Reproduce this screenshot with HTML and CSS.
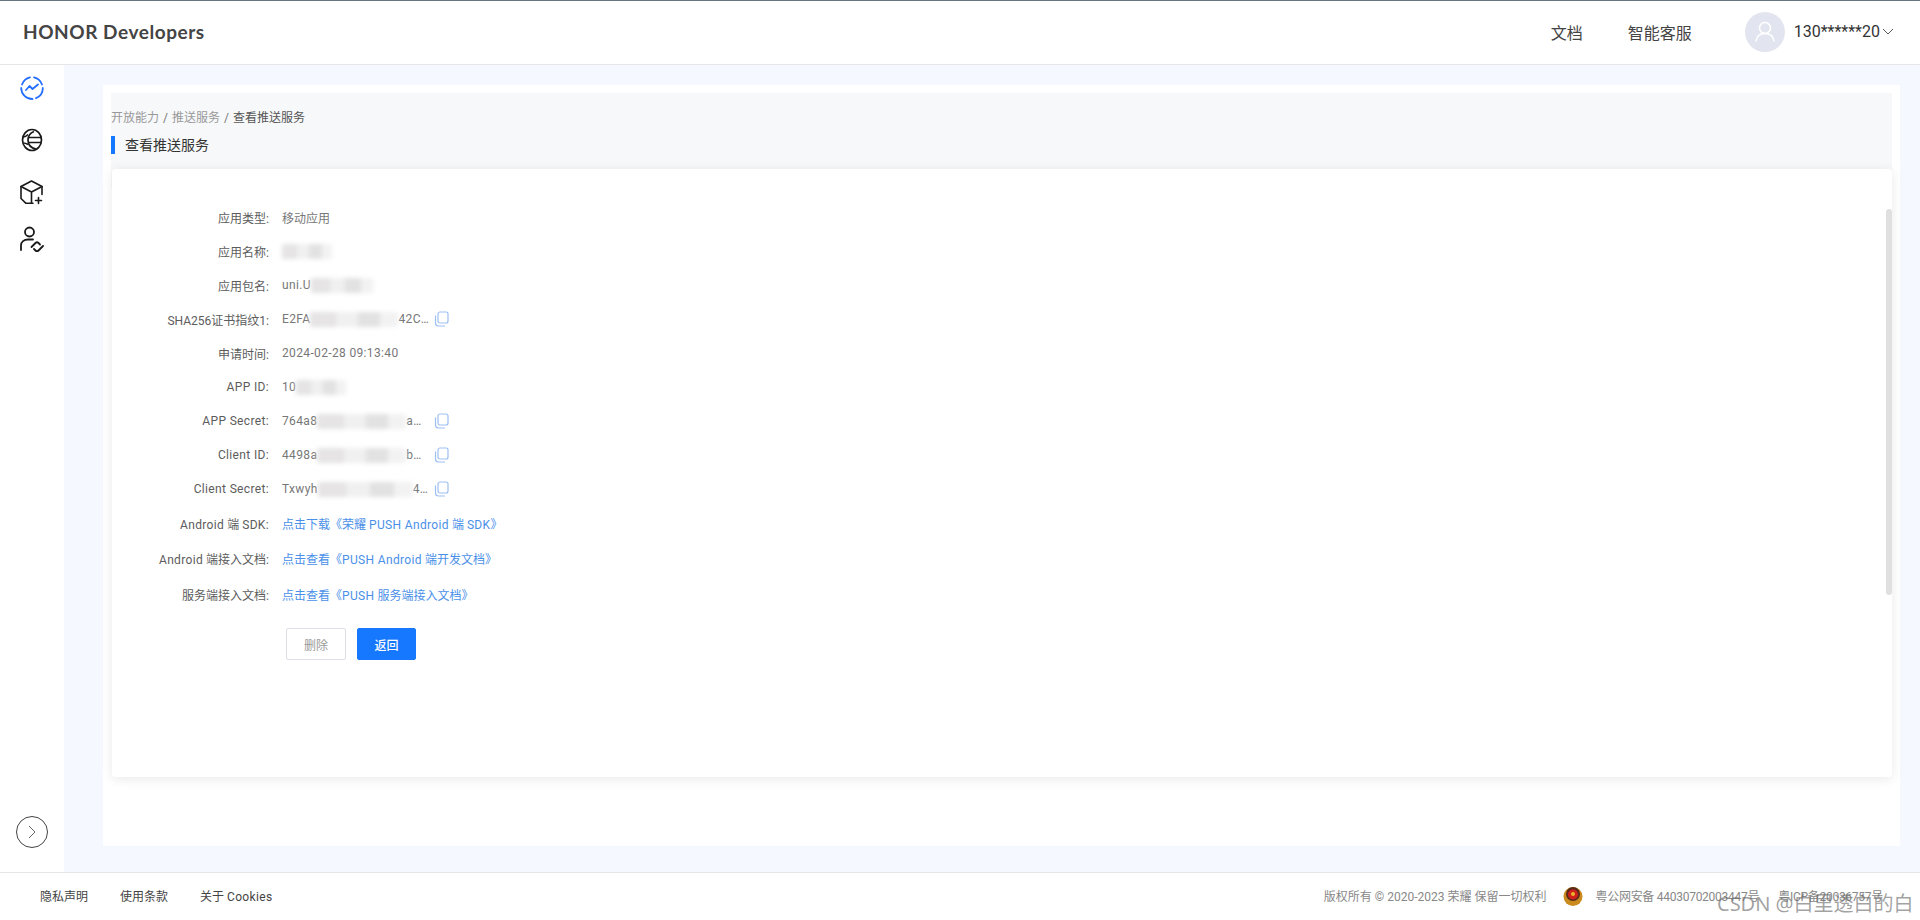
FILE: index.html
```html
<!DOCTYPE html>
<html lang="zh-CN">
<head>
<meta charset="utf-8">
<title>HONOR Developers</title>
<link rel="stylesheet" href="styles.css">
</head>
<body>
<header class="topbar">
  <div class="logo">HONOR Developers</div>
  <nav class="topnav">
    <a class="nav-doc">文档</a>
    <a class="nav-help">智能客服</a>
    <div class="user">
      <span class="avatar">
        <svg width="40" height="40" viewBox="0 0 40 40" fill="none" stroke="#fff" stroke-width="1.5"><circle cx="20" cy="16" r="5.5"/><path d="M11 29c.8-5 4.400-7.500 9-7.500s8.200 2.500 9 7.500" stroke-linecap="round"/></svg>
      </span>
      <span class="user-name">130******20</span>
      <svg class="caret" width="12" height="7" viewBox="0 0 12 7" fill="none" stroke="#555" stroke-width="1"><path d="M1 1l5 5 5-5"/></svg>
    </div>
  </nav>
</header>
<div class="middle">
  <aside class="sidebar">
    <div class="side-icons">
      <svg class="ic-1" width="26" height="26" viewBox="0 0 26 26" fill="none" stroke="#256fff" stroke-width="1.8"><path d="M3 9.500A11 11 0 0 1 11 2.300M15 2.300A11 11 0 0 1 23 9.500M23.800 13A11 11 0 0 1 17 23.200M13.500 24A11 11 0 0 1 2.200 13" stroke-linecap="round"/><path d="M7 15l3.500-4 3 3L19 9.500" stroke-linecap="round" stroke-linejoin="round"/></svg>
      <svg class="ic-2" width="22" height="26" viewBox="0 0 22 26" fill="none" stroke="#1a1a1a" stroke-width="1.700"><ellipse cx="11" cy="13" rx="9.500" ry="10.500"/><path d="M7 13c0-4 2-7 6-8.500"/><path d="M7 13c0 4.500 3 8 8 9"/><path d="M2.500 10c2 0 3-1 4.500-2.500M2.500 16c2 0 3 .5 4.500 1.500"/><path d="M8 10.500h12.500M8 15.500h12.500"/></svg>
      <svg class="ic-3" width="26" height="26" viewBox="0 0 26 26" fill="none" stroke="#1a1a1a" stroke-width="1.600" stroke-linejoin="round" stroke-linecap="round"><path d="M14 24.300H7L2 19.500V7.500L12.500 2 23 7.500v8"/><path d="M2 7.500l10.500 5.500L23 7.500M12.500 13v11"/><path d="M19.500 18.500v6M16.500 21.500h6"/></svg>
      <svg class="ic-4" width="26" height="26" viewBox="0 0 26 26" fill="none" stroke="#1a1a1a" stroke-width="1.800" stroke-linecap="round" stroke-linejoin="round"><circle cx="10.500" cy="6" r="4.500"/><path d="M2 24v-4.500c0-3.500 3-6 7-6h5"/><path d="M12.500 21l4-4c1-1 2.200-.8 3 0l1.500 1.500"/><path d="M24 20l-4.500 4.500c-1 1-2.200.8-3 0L15 23"/></svg>
    </div>
    <div class="collapse">
      <svg width="10" height="14" viewBox="0 0 10 14" fill="none" stroke="#666" stroke-width="1"><path d="M2 1l6 6-6 6"/></svg>
    </div>
  </aside>
  <main class="main">
    <section class="panel">
      <div class="inner">
        <div class="crumbs"><span class="crumb-dim">开放能力</span><i>/</i><span class="crumb-dim">推送服务</span><i>/</i><span>查看推送服务</span></div>
        <h1 class="page-title">查看推送服务</h1>
        <div class="card">
          <div class="track"></div>
          <dl class="rows">
            <div class="row"><dt>应用类型:</dt><dd>移动应用</dd></div>
            <div class="row"><dt>应用名称:</dt><dd><span class="mask mask-name"></span></dd></div>
            <div class="row"><dt>应用包名:</dt><dd><span class="lat">uni.U</span><span class="mask mask-pkg"></span></dd></div>
            <div class="row"><dt>SHA256证书指纹1:</dt><dd><span class="val"><span class="lat">E2FA</span><span class="mask mask-sha"></span><span class="lat">42C…</span></span><svg class="copy" width="15" height="16" viewBox="0 0 15 16" fill="none" stroke="#9dc0f3" stroke-width="1.200"><rect x="4" y="1" width="10" height="11" rx="2"/><path d="M1.500 4.500V12A3 3 0 0 0 4.500 15H11"/></svg></dd></div>
            <div class="row"><dt>申请时间:</dt><dd class="lat">2024-02-28 09:13:40</dd></div>
            <div class="row"><dt class="lat">APP ID:</dt><dd><span class="lat">10</span><span class="mask mask-id"></span></dd></div>
            <div class="row"><dt class="lat">APP Secret:</dt><dd><span class="val"><span class="lat">764a8</span><span class="mask mask-secret"></span><span class="lat">a…</span></span><svg class="copy" width="15" height="16" viewBox="0 0 15 16" fill="none" stroke="#9dc0f3" stroke-width="1.200"><rect x="4" y="1" width="10" height="11" rx="2"/><path d="M1.500 4.500V12A3 3 0 0 0 4.500 15H11"/></svg></dd></div>
            <div class="row"><dt class="lat">Client ID:</dt><dd><span class="val"><span class="lat">4498a</span><span class="mask mask-client"></span><span class="lat">b…</span></span><svg class="copy" width="15" height="16" viewBox="0 0 15 16" fill="none" stroke="#9dc0f3" stroke-width="1.200"><rect x="4" y="1" width="10" height="11" rx="2"/><path d="M1.500 4.500V12A3 3 0 0 0 4.500 15H11"/></svg></dd></div>
            <div class="row"><dt class="lat">Client Secret:</dt><dd><span class="val"><span class="lat">Txwyh</span><span class="mask mask-csecret"></span><span class="lat">4…</span></span><svg class="copy" width="15" height="16" viewBox="0 0 15 16" fill="none" stroke="#9dc0f3" stroke-width="1.200"><rect x="4" y="1" width="10" height="11" rx="2"/><path d="M1.500 4.500V12A3 3 0 0 0 4.500 15H11"/></svg></dd></div>
            <div class="row"><dt><span class="lat">Android</span> 端 <span class="lat">SDK:</span></dt><dd class="link">点击下载《荣耀 <span class="lat">PUSH Android</span> 端 <span class="lat">SDK</span>》</dd></div>
            <div class="row row-tall"><dt><span class="lat">Android</span> 端接入文档:</dt><dd class="link">点击查看《<span class="lat">PUSH Android</span> 端开发文档》</dd></div>
            <div class="row row-tall"><dt>服务端接入文档:</dt><dd class="link">点击查看《<span class="lat">PUSH</span> 服务端接入文档》</dd></div>
          </dl>
          <div class="actions">
            <button class="btn btn-ghost">删除</button>
            <button class="btn btn-primary">返回</button>
          </div>
        </div>
      </div>
    </section>
  </main>
</div>
<footer class="footer">
  <div class="foot-links"><a>隐私声明</a><a>使用条款</a><a>关于 <span class="lat">Cookies</span></a></div>
  <div class="foot-legal">
    <span>版权所有 © 2020-2023 荣耀 保留一切权利</span>
    <svg class="badge" width="20" height="22" viewBox="0 0 20 22"><circle cx="10" cy="11.500" r="9.500" fill="#c98a1e"/><circle cx="10" cy="9" r="7" fill="#5a2a1a"/><circle cx="10" cy="9.500" r="5" fill="#d0201c"/><circle cx="10" cy="9" r="2" fill="#e8b52c"/></svg>
    <span class="beian">粤公网安备 44030702003447号</span>
    <span class="icp">粤ICP备20036757号</span>
  </div>
</footer>
<div class="watermark">CSDN @白里透白的白</div>
</body>
</html>
```
FILE: styles.css
```css
* { box-sizing: border-box; }
html, body { margin: 0; height: 100%; }
body {
  height: 920px;
  overflow: hidden;
  display: flex;
  flex-direction: column;
  font-family: Roboto, "Noto Sans CJK SC", sans-serif;
  font-size: 12px;
  color: #4a4a4a;
  background: #fff;
}
.lat { letter-spacing: .35px; }
.topbar {
  height: 65px;
  flex: none;
  display: flex;
  align-items: center;
  justify-content: space-between;
  padding: 0 26px 2px 23px;
  border-top: 1px solid #66757f;
  border-bottom: 1px solid #e6e6e6;
}
.logo { font-family: Lato, sans-serif; font-weight: 700; font-size: 19px; letter-spacing: .55px; color: #444; }
.topnav { display: flex; align-items: center; font-size: 16px; color: #444; }
.nav-doc { margin-right: 45px; }
.nav-help { margin-right: 53px; }
.user { display: flex; align-items: center; }
.avatar { width: 40px; height: 40px; border-radius: 50%; background: #e2e5ef; display: flex; }
.user-name { font-family: Roboto, sans-serif; margin-left: 9px; color: #333; }
.caret { margin-left: 2px; }
.middle { flex: 1; display: flex; min-height: 0; }
.sidebar {
  width: 64px;
  flex: none;
  display: flex;
  flex-direction: column;
  justify-content: space-between;
  align-items: center;
  padding: 10px 0 24px;
}
.side-icons { display: flex; flex-direction: column; align-items: center; gap: 26px; }
.ic-4 { margin-top: -5px; }
.collapse {
  width: 32px;
  height: 32px;
  border: 1px solid #444;
  border-radius: 50%;
  display: flex;
  align-items: center;
  justify-content: center;
}
.main { flex: 1; background: #f5f8ff; padding: 20px 20px 26px 39px; min-width: 0; }
.panel { height: 100%; background: #fff; padding: 8px 8px 0; }
.inner { background: linear-gradient(#f7f8fa 0 96px, #fff 96px); height: 100%; }
.crumbs { padding-top: 16px; line-height: 18px; color: #555; display: flex; }
.crumbs i { font-style: normal; margin: 0 4px; color: #777; }
.crumb-dim { color: #999; }
.page-title {
  margin: 9px 0 0;
  font-size: 14px;
  font-weight: 400;
  line-height: 18px;
  color: #333;
  border-left: 4px solid #1677ff;
  padding-left: 10px;
}
.card {
  position: relative;
  margin: 15px 0 0 1px;
  width: 1780px;
  height: 608px;
  background: #fff;
  border-radius: 4px;
  box-shadow: 0 2px 12px rgba(0,0,0,.09);
  padding-top: 31px;
}
.track {
  position: absolute;
  right: 0;
  top: 40px;
  width: 6px;
  height: 386px;
  border-radius: 3px;
  background: #e0e0e0;
}
.rows { margin: 0; }
.row { display: flex; height: 34px; align-items: center; }
.row-tall { height: 36px; }
dt { width: 157px; text-align: right; flex: none; color: #5c5c5c; }
dd { margin: 0 0 0 13px; display: flex; align-items: center; color: #777; }
.val { width: 152px; flex: none; display: flex; align-items: center; }
dd.link { display: block; color: #4a90e8; }
.copy { flex: none; }
.mask {
  display: inline-block;
  height: 15px;
  filter: blur(2px);
  background: linear-gradient(90deg, #e6e4e4 0 30%, #f0f0f0 30% 55%, #e2e2e2 55% 80%, #f2f2f2 80%);
}
.mask-name { width: 50px; }
.mask-pkg { width: 62px; }
.mask-sha { width: 88px; }
.mask-id { width: 50px; }
.mask-secret { width: 89px; }
.mask-client { width: 89px; }
.mask-csecret { width: 95px; }
.actions { display: flex; gap: 11px; margin: 16px 0 0 174px; }
.btn {
  width: 60px;
  height: 32px;
  font: inherit;
  font-size: 12px;
  border-radius: 2px;
  border: 1px solid #dcdfe6;
  background: #fff;
  color: #999;
  padding: 0;
}
.btn-primary { width: 59px; background: #1677ff; border-color: #1677ff; color: #fff; font-weight: 500; }
.footer {
  height: 48px;
  flex: none;
  border-top: 1px solid #e6e6e6;
  display: flex;
  justify-content: space-between;
  align-items: center;
  padding: 0 37px 2px 40px;
  color: #444;
}
.foot-links { display: flex; gap: 32px; }
.foot-legal { display: flex; align-items: center; color: #888; }
.badge { margin: 0 12px 0 17px; }
.beian { margin-right: 19px; letter-spacing: -.27px; }
.icp { letter-spacing: -.27px; }
.watermark {
  position: absolute;
  left: 1717px;
  top: 891px;
  font-family: "Noto Sans", "Noto Sans CJK SC", sans-serif;
  font-size: 20px;
  line-height: 26px;
  color: rgba(100,100,100,.6);
  white-space: nowrap;
}
```
